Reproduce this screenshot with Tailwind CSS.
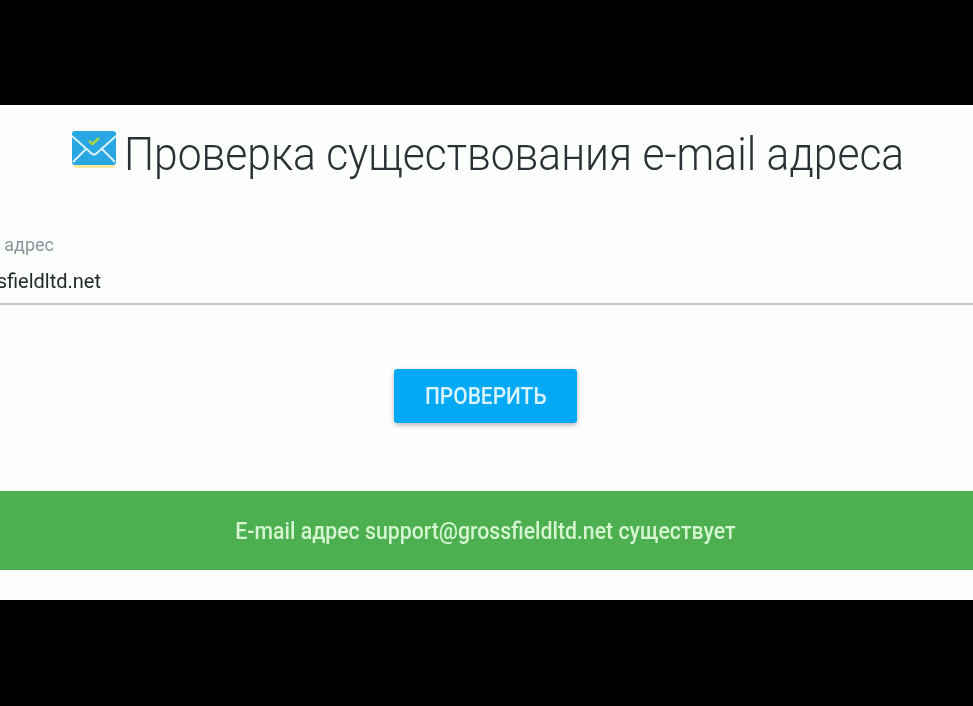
<!DOCTYPE html>
<html lang="ru">
<head>
  <meta charset="UTF-8" />
  <title>Проверка существования e-mail адреса</title>
  <script src="https://cdn.jsdelivr.net/npm/@tailwindcss/browser@4"></script>
</head>
<body class="bg-black font-['Roboto',sans-serif] overflow-hidden">
  <div class="h-[706px] flex flex-col">
    <div class="h-[105px] bg-black"></div>

    <main class="h-[495px] bg-[#fdfffd] overflow-hidden">
      <!-- Title -->
      <div class="h-[102px] pt-[20px] pl-[71px] flex items-start">
        <svg class="w-[46px] h-[38px] mt-[6px] mr-[7px] shrink-0 blur-[0.4px]" viewBox="0 0 46 38">
          <rect x="3" y="30" width="41" height="7" rx="2" fill="#fce7a0" />
          <rect x="1" y="0" width="44" height="34" rx="3" fill="#29a7e3" />
          <path d="M1 5 L20 22 Q23 25 26 22 L45 5" fill="none" stroke="#d8f1fb" stroke-width="2" />
          <path d="M2 31 L15 18 M44 31 L31 18" fill="none" stroke="#d8f1fb" stroke-width="2" />
          <path d="M18 10 L21.5 13 L28 7" fill="none" stroke="#a8d64a" stroke-width="2.6" />
        </svg>
        <div class="w-[778px]">
          <h1 class="text-[47px] leading-[58px] font-light text-[#2a3238] whitespace-nowrap origin-left scale-x-[0.905] blur-[0.4px]">Проверка существования e-mail адреса</h1>
        </div>
      </div>

      <!-- Input, cut off by the left edge -->
      <div class="h-[98px] border-b-2 border-[#c3c8c5]">
        <div class="pt-[27px] w-[54px] flex justify-end text-[18px] leading-[22px] text-[#87949c] whitespace-nowrap">
          <span class="shrink-0 blur-[0.4px]">E-mail адрес</span>
        </div>
        <div class="pt-[13px] w-[101px] flex justify-end text-[20px] leading-[24px] text-[#22282c] whitespace-nowrap">
          <span class="shrink-0 blur-[0.4px]">support@grossfieldltd.net</span>
        </div>
      </div>

      <!-- Button -->
      <div class="flex justify-center pt-[64px] pr-[2px]">
        <button class="w-[183px] h-[54px] pt-[3px] rounded-[3px] bg-[#03a9f4] text-[#d9f4ff] text-[23px] font-medium shadow-[0_2px_5px_rgba(0,0,0,0.3)]">
          <span class="inline-block scale-x-[0.91] blur-[0.4px]">ПРОВЕРИТЬ</span>
        </button>
      </div>

      <!-- Result -->
      <div class="mt-[68px] h-[79px] pt-[3px] pr-[2px] bg-[#4caf50] flex items-center justify-center text-[23px] font-medium text-[#d5f5d0]">
        <span class="shrink-0 scale-x-[0.925] blur-[0.4px]">E-mail адрес support@grossfieldltd.net существует</span>
      </div>
    </main>

    <div class="flex-1 bg-black"></div>
  </div>
</body>
</html>
